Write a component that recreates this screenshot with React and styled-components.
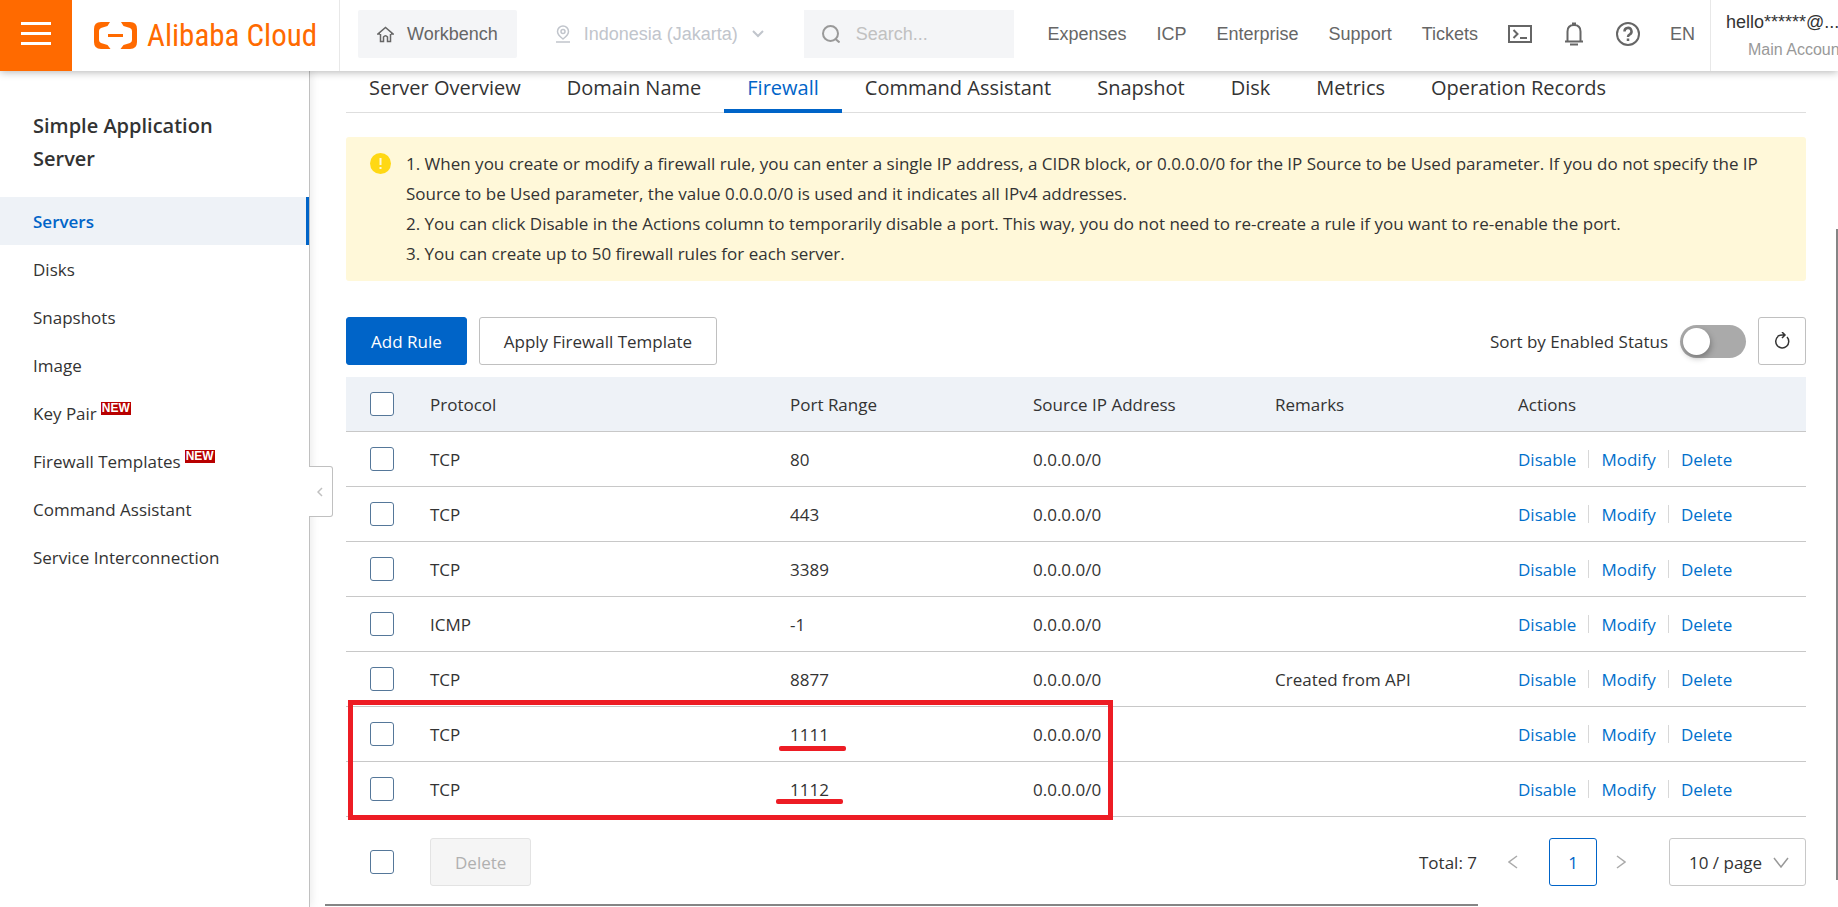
import React from "react";
import styled, { createGlobalStyle, css } from "styled-components";

const GlobalStyle = createGlobalStyle`
  * {
    box-sizing: border-box;
  }
  body {
    margin: 0;
    overflow: hidden;
    background: #fff;
    color: #333;
    font-family: "Segoe UI", "Open Sans", "Noto Sans", sans-serif;
    font-size: 17px;
  }
  button, input, select {
    font: inherit;
    color: inherit;
    margin: 0;
  }
  a {
    color: inherit;
    text-decoration: none;
  }
`;

const Page = styled.div`
  display: flex;
  flex-direction: column;
  height: 100vh;
`;

const Header = styled.header`
  position: relative;
  z-index: 2;
  display: flex;
  flex: 0 0 71px;
  background: #fff;
  box-shadow: 0 1px 8px rgba(0, 0, 0, 0.3);
  font-family: "Liberation Sans", Arial, sans-serif;
  font-size: 18px;
  color: #666;
  white-space: nowrap;
`;

const HeaderMain = styled.div`
  display: flex;
  align-items: center;
  flex: 1;
  padding-bottom: 3px;
`;

const MenuButton = styled.button`
  display: flex;
  flex-direction: column;
  align-items: center;
  justify-content: center;
  gap: 7px;
  width: 72px;
  padding: 0 0 4px;
  border: 0;
  background: #ff6a00;
`;

const MenuBar = styled.span`
  width: 30px;
  height: 3px;
  background: #fff;
`;

const Brand = styled.a`
  display: flex;
  align-items: center;
  gap: 10px;
  width: 268px;
  padding-left: 22px;
  border-right: 1px solid #e8e8e8;
  color: #ff6a00;
  font-family: "Liberation Sans Narrow", "Arial Narrow", "Roboto Condensed", "Liberation Sans", sans-serif;
  font-size: 31px;
`;

const Workbench = styled.button`
  display: flex;
  align-items: center;
  gap: 13px;
  height: 48px;
  margin-left: 18px;
  padding: 0 19px;
  border: 0;
  border-radius: 2px;
  background: #f4f5f7;
`;

const Region = styled.button`
  display: flex;
  align-items: center;
  gap: 14px;
  margin: 0 40px 0 39px;
  padding: 0;
  border: 0;
  background: none;
  color: #c1c5cc;
`;

const SearchBox = styled.label`
  display: flex;
  align-items: center;
  gap: 16px;
  width: 210px;
  height: 48px;
  padding-left: 18px;
  background: #f4f5f7;
  color: #999;
`;

const SearchInput = styled.input`
  width: 140px;
  padding: 0;
  border: 0;
  outline: none;
  background: none;
  &::placeholder {
    color: #c1c1c1;
    opacity: 1;
  }
`;

const TopNav = styled.nav`
  display: flex;
  align-items: center;
  gap: 30px;
  margin-left: auto;
  padding-right: 15px;
`;

const IconButton = styled.button`
  display: flex;
  padding: 0;
  border: 0;
  background: none;
`;

const Account = styled.div`
  display: flex;
  flex-direction: column;
  flex: 0 0 128px;
  padding: 10px 0 0 15px;
  border-left: 1px solid #e8e8e8;
  overflow: hidden;
  color: #333;
  line-height: 24px;
`;

const AccountType = styled.span`
  padding-left: 22px;
  color: #999;
  font-size: 16px;
  line-height: 32px;
`;

const Body = styled.div`
  display: flex;
  flex: 1;
  min-height: 0;
`;

const Sidebar = styled.aside`
  position: relative;
  flex: 0 0 310px;
  border-right: 1px solid #c0c0c0;
  box-shadow: 2px 0 8px rgba(0, 0, 0, 0.08);
`;

const SidebarTitle = styled.h2`
  margin: 0;
  padding: 38px 80px 22px 33px;
  font-size: 20px;
  font-weight: 600;
  line-height: 33px;
`;

const SidebarLink = styled.a`
  display: flex;
  align-items: center;
  gap: 4px;
  height: 48px;
  padding-left: 33px;
  ${(p) =>
    p.$active &&
    css`
      border-right: 3px solid #0064c8;
      background: #eef2f7;
      color: #0064c8;
      font-weight: 600;
    `}
`;

const NewTag = styled.sup`
  align-self: flex-start;
  margin-top: 13px;
  padding: 0 1px;
  background: #b80000;
  color: #fff;
  font-family: "Liberation Sans", Arial, sans-serif;
  font-size: 12px;
  font-weight: 700;
  line-height: 13px;
`;

const CollapseButton = styled.button`
  position: absolute;
  top: 395px;
  left: 100%;
  display: flex;
  align-items: center;
  justify-content: center;
  width: 24px;
  height: 51px;
  padding: 0 2px 0 0;
  border: 1px solid #c0c0c0;
  border-left: 0;
  border-radius: 0 3px 3px 0;
  background: #fff;
  color: #c0c0c0;
`;

const Content = styled.main`
  flex: 1;
  min-width: 0;
  padding: 0 32px 0 36px;
`;

const Tabs = styled.nav`
  display: flex;
  height: 42px;
  border-bottom: 1px solid #dedede;
  font-size: 20px;
  line-height: 33px;
  white-space: nowrap;
`;

const Tab = styled.a`
  height: 42px;
  padding: 0 23px;
  ${(p) =>
    p.$active &&
    css`
      border-bottom: 4px solid #0064c8;
      color: #0064c8;
    `}
`;

const Notice = styled.section`
  display: flex;
  gap: 15px;
  margin-top: 24px;
  padding: 12px 24px;
  border-radius: 3px;
  background: #fff8d9;
  line-height: 30px;
`;

const NoticeIcon = styled.svg`
  flex: none;
  margin-top: 4px;
`;

const NoticeLine = styled.p`
  margin: 0;
`;

const Toolbar = styled.div`
  display: flex;
  align-items: center;
  gap: 12px;
  margin: 36px 0 12px;
`;

const Button = styled.button`
  height: 48px;
  padding: 0 24px;
  border: 1px solid #c0c0c0;
  border-radius: 3px;
  background: #fff;
  ${(p) =>
    p.$primary &&
    css`
      border-color: #0064c8;
      background: #0064c8;
      color: #fff;
    `}
  &:disabled {
    border-color: #e3e3e3;
    background: #f5f5f5;
    color: #b0b0b0;
  }
`;

const SquareButton = styled(Button)`
  display: flex;
  align-items: center;
  justify-content: center;
  width: 48px;
  padding: 0;
`;

const SortLabel = styled.label`
  display: flex;
  align-items: center;
  gap: 12px;
  margin-left: auto;
`;

const Switch = styled.input`
  appearance: none;
  display: flex;
  width: 66px;
  height: 33px;
  padding: 3px;
  border-radius: 17px;
  background: #aaa;
  &::before {
    content: "";
    width: 27px;
    height: 27px;
    border-radius: 50%;
    background: #fff;
    box-shadow: 1px 3px 6px rgba(0, 0, 0, 0.3);
  }
  &:checked {
    justify-content: flex-end;
    background: #0064c8;
  }
`;

const TableWrap = styled.div`
  position: relative;
`;

const Table = styled.table`
  width: 100%;
  table-layout: fixed;
  border-collapse: separate;
  border-spacing: 0;
  text-align: left;
`;

const Th = styled.th`
  width: ${(p) => p.$width || "auto"};
  height: 55px;
  padding: 0 0 0 24px;
  border-bottom: 1px solid #c8c8c8;
  background: #eef2f7;
  font-weight: 400;
`;

const Td = styled.td`
  height: 55px;
  padding: 0 0 0 24px;
  border-bottom: 1px solid #c8c8c8;
`;

const Checkbox = styled.input`
  appearance: none;
  display: block;
  width: 24px;
  height: 24px;
  border: 1px solid #557799;
  border-radius: 3px;
  background: #fff;
  &:checked {
    background: #0064c8;
  }
`;

const Actions = styled.div`
  display: flex;
  align-items: center;
`;

const ActionLink = styled.a`
  color: #0070cc;
  & + & {
    margin-left: 12px;
    padding-left: 13px;
    background: linear-gradient(#d8d8d8, #d8d8d8) left center / 1px 18px no-repeat;
  }
`;

const Outline = styled.div`
  position: absolute;
  top: 323px;
  left: 2px;
  width: 765px;
  height: 120px;
  border: 5px solid #ed1c24;
  pointer-events: none;
`;

const Port = styled.span`
  position: relative;
`;

const Underline = styled.span`
  position: absolute;
  top: ${(p) => p.$top}px;
  left: ${(p) => p.$left}px;
  width: 67px;
  height: 5px;
  border-radius: 2px;
  background: #ed1c24;
`;

const TableFooter = styled.div`
  display: flex;
  align-items: center;
  padding: 21px 0 0 24px;
`;

const BulkActions = styled.div`
  display: flex;
  align-items: center;
  gap: 36px;
`;

const Pagination = styled.div`
  display: flex;
  align-items: center;
  margin-left: auto;
`;

const PageArrow = styled.button`
  display: flex;
  justify-content: center;
  width: ${(p) => p.$width}px;
  padding: 0;
  border: 0;
  background: none;
  color: #aaa;
`;

const PageButton = styled(SquareButton)`
  border-color: #0064c8;
  color: #0064c8;
`;

const PageSize = styled.label`
  display: grid;
  align-items: center;
  margin-left: 24px;
  & > * {
    grid-area: 1 / 1;
  }
  svg {
    justify-self: end;
    margin-right: 17px;
    pointer-events: none;
  }
`;

const Select = styled.select`
  appearance: none;
  width: 137px;
  height: 48px;
  padding: 0 0 0 19px;
  border: 1px solid #c8c8c8;
  border-radius: 3px;
  background: #fff;
`;

const ScrollThumbX = styled.div`
  position: fixed;
  bottom: 1px;
  left: 325px;
  right: 360px;
  height: 2px;
  background: #858585;
`;

const ScrollThumbY = styled.div`
  position: fixed;
  top: 229px;
  right: 0;
  bottom: 27px;
  width: 2px;
  background: #858585;
`;

const Icon = ({ size = 24, width = size, height = size, stroke = 1.5, children }) => (
  <svg
    width={width}
    height={height}
    viewBox={`0 0 ${width} ${height}`}
    fill="none"
    stroke="currentColor"
    strokeWidth={stroke}
    aria-hidden="true"
  >
    {children}
  </svg>
);

const menu = [
  { label: "Servers", active: true },
  { label: "Disks" },
  { label: "Snapshots" },
  { label: "Image" },
  { label: "Key Pair", isNew: true },
  { label: "Firewall Templates", isNew: true },
  { label: "Command Assistant" },
  { label: "Service Interconnection" },
];

const tabs = [
  "Server Overview",
  "Domain Name",
  "Firewall",
  "Command Assistant",
  "Snapshot",
  "Disk",
  "Metrics",
  "Operation Records",
];

const rules = [
  { protocol: "TCP", port: "80" },
  { protocol: "TCP", port: "443" },
  { protocol: "TCP", port: "3389" },
  { protocol: "ICMP", port: "-1" },
  { protocol: "TCP", port: "8877", remarks: "Created from API" },
  { protocol: "TCP", port: "1111", mark: { top: 23, left: -11 } },
  { protocol: "TCP", port: "1112", mark: { top: 21, left: -14 } },
];

const TopBar = () => (
  <Header>
    <MenuButton aria-label="Menu">
      <MenuBar />
      <MenuBar />
      <MenuBar />
    </MenuButton>
    <Brand href="#">
      <svg width="43" height="27" viewBox="0 0 43 27" fill="currentColor" aria-hidden="true">
        <path d="M16 0H7Q0 0 0 7v13q0 7 7 7h9.500l-3-4-6.500-2q-2-1-2-3V9q0-2 2-3l6.500-2z" />
        <path d="M27 0h9q7 0 7 7v13q0 7-7 7h-9.500l3-4 6.500-2q2-1 2-3V9q0-2-2-3l-6.500-2z" />
        <path d="M14 12h15v3H14z" />
      </svg>
      Alibaba Cloud
    </Brand>
    <HeaderMain>
      <Workbench>
        <Icon width={17} height={17}>
          <path d="M3 8H1l7.500-6.500L16 8h-2M3.500 8v7.500h3V11q2-2.500 4 0v4.500h3V8" />
        </Icon>
        Workbench
      </Workbench>
      <Region>
        <Icon width={14} height={18}>
          <path d="M7 14C3 11 1.500 9 1.500 6.500a5.500 5.500 0 0 1 11 0C12.500 9 11 11 7 14zM0 17h14" />
          <circle cx="7" cy="6.500" r="2" />
        </Icon>
        Indonesia (Jakarta)
        <Icon width={12} height={8} stroke={2}>
          <path d="M1 1l5 5 5-5" />
        </Icon>
      </Region>
      <SearchBox>
        <Icon size={18} stroke={2}>
          <circle cx="8.500" cy="8.500" r="7.500" />
          <path d="M13.500 14l4 3.500" />
        </Icon>
        <SearchInput placeholder="Search..." aria-label="Search" />
      </SearchBox>
      <TopNav>
        <a href="#">Expenses</a>
        <a href="#">ICP</a>
        <a href="#">Enterprise</a>
        <a href="#">Support</a>
        <a href="#">Tickets</a>
        <IconButton aria-label="Cloud Shell">
          <Icon width={24} height={18} stroke={2}>
            <path d="M1 1h22v16H1zM5.500 5l4 4-4 4M12 13h7" />
          </Icon>
        </IconButton>
        <IconButton aria-label="Notifications">
          <Icon width={24} height={24} stroke={2}>
            <path d="M3 19.500h18M5.500 19V9.500Q5.500 3 12 3t6.500 6.500V19M10 1.500h4M8 22.500h8" />
          </Icon>
        </IconButton>
        <IconButton aria-label="Help">
          <Icon size={24} stroke={2}>
            <circle cx="12" cy="12" r="11" />
            <path d="M8.500 9.500a3.500 3.500 0 1 1 5.300 2.900Q12 13.300 12 15M12 16.500V19" strokeWidth="2.500" />
          </Icon>
        </IconButton>
        <a href="#">EN</a>
      </TopNav>
    </HeaderMain>
    <Account>
      hello******@...
      <AccountType>Main Account</AccountType>
    </Account>
  </Header>
);

const SideMenu = () => (
  <Sidebar>
    <SidebarTitle>Simple Application Server</SidebarTitle>
    {menu.map((item) => (
      <SidebarLink key={item.label} href="#" $active={item.active}>
        {item.label}
        {item.isNew && <NewTag>NEW</NewTag>}
      </SidebarLink>
    ))}
    <CollapseButton aria-label="Collapse sidebar">
      <Icon width={6} height={10}>
        <path d="M5 1L1 5l4 4" />
      </Icon>
    </CollapseButton>
  </Sidebar>
);

const RuleRow = ({ protocol, port, remarks, mark }) => (
  <tr>
    <Td>
      <Checkbox type="checkbox" aria-label={`Select port ${port}`} />
    </Td>
    <Td>{protocol}</Td>
    <Td>
      <Port>
        {port}
        {mark && <Underline $top={mark.top} $left={mark.left} />}
      </Port>
    </Td>
    <Td>0.0.0.0/0</Td>
    <Td>{remarks}</Td>
    <Td>
      <Actions>
        <ActionLink href="#">Disable</ActionLink>
        <ActionLink href="#">Modify</ActionLink>
        <ActionLink href="#">Delete</ActionLink>
      </Actions>
    </Td>
  </tr>
);

const App = () => (
  <>
    <GlobalStyle />
    <Page>
      <TopBar />
      <Body>
        <SideMenu />
        <Content>
          <Tabs>
            {tabs.map((tab) => (
              <Tab key={tab} href="#" $active={tab === "Firewall"}>
                {tab}
              </Tab>
            ))}
          </Tabs>
          <Notice>
            <NoticeIcon width="21" height="21" viewBox="0 0 21 21" aria-hidden="true">
              <circle cx="10.500" cy="10.500" r="10.500" fill="#ffd814" />
              <path d="M10.500 5v7M10.500 14v2" stroke="#fff8d9" strokeWidth="2" />
            </NoticeIcon>
            <div>
              <NoticeLine>
                1. When you create or modify a firewall rule, you can enter a single IP address, a CIDR block, or
                0.0.0.0/0 for the IP Source to be Used parameter. If you do not specify the IP Source to be Used
                parameter, the value 0.0.0.0/0 is used and it indicates all IPv4 addresses.
              </NoticeLine>
              <NoticeLine>
                2. You can click Disable in the Actions column to temporarily disable a port. This way, you do not need
                to re-create a rule if you want to re-enable the port.
              </NoticeLine>
              <NoticeLine>3. You can create up to 50 firewall rules for each server.</NoticeLine>
            </div>
          </Notice>
          <Toolbar>
            <Button $primary>Add Rule</Button>
            <Button>Apply Firewall Template</Button>
            <SortLabel>
              Sort by Enabled Status
              <Switch type="checkbox" role="switch" />
            </SortLabel>
            <SquareButton aria-label="Refresh">
              <Icon size={18}>
                <path d="M5 4.500A6.500 6.500 0 1 0 14 5M4.500 4.500Q7 2.500 11 3M9 0l3 3-3 3" />
              </Icon>
            </SquareButton>
          </Toolbar>
          <TableWrap>
            <Table>
              <thead>
                <tr>
                  <Th $width="60px">
                    <Checkbox type="checkbox" aria-label="Select all rules" />
                  </Th>
                  <Th $width="360px">Protocol</Th>
                  <Th $width="243px">Port Range</Th>
                  <Th $width="242px">Source IP Address</Th>
                  <Th $width="243px">Remarks</Th>
                  <Th>Actions</Th>
                </tr>
              </thead>
              <tbody>
                {rules.map((rule) => (
                  <RuleRow key={rule.port} {...rule} />
                ))}
              </tbody>
            </Table>
            <Outline />
          </TableWrap>
          <TableFooter>
            <BulkActions>
              <Checkbox type="checkbox" aria-label="Select all on this page" />
              <Button disabled>Delete</Button>
            </BulkActions>
            <Pagination>
              Total: 7
              <PageArrow $width={72} aria-label="Previous page">
                <Icon width={10} height={14}>
                  <path d="M9 1L1 7l8 6" />
                </Icon>
              </PageArrow>
              <PageButton>1</PageButton>
              <PageArrow $width={48} aria-label="Next page">
                <Icon width={10} height={14}>
                  <path d="M1 1l8 6-8 6" />
                </Icon>
              </PageArrow>
              <PageSize>
                <Select aria-label="Rows per page">
                  <option>10 / page</option>
                  <option>20 / page</option>
                </Select>
                <Icon width={16} height={11}>
                  <path d="M1 1l7 9 7-9" stroke="#999" />
                </Icon>
              </PageSize>
            </Pagination>
          </TableFooter>
        </Content>
      </Body>
      <ScrollThumbX />
      <ScrollThumbY />
    </Page>
  </>
);

export default App;
